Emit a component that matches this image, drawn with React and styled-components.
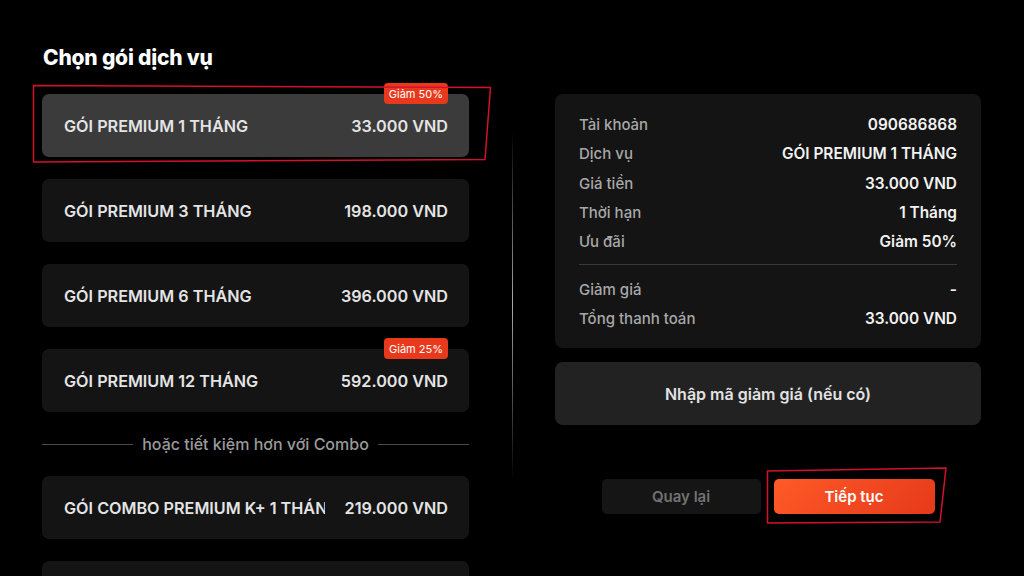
import React from "react";
import styled, { createGlobalStyle } from "styled-components";

const Global = createGlobalStyle`
  html, body { margin: 0; padding: 0; background: #000; }
  body { font-family: Inter, "Noto Sans", sans-serif; color: #e6e6e6; }
  * { box-sizing: border-box; }
`;

const Page = styled.div`
  position: relative;
  width: 1024px;
  height: 576px;
  overflow: hidden;
  display: flex;
  align-items: flex-start;
  padding-left: 42px;
`;

const LeftCol = styled.div`
  width: 427px;
  display: flex;
  flex-direction: column;
  flex-shrink: 0;
`;

const Title = styled.h1`
  margin: 0;
  padding: 45px 0 0 1px;
  height: 94px;
  font-size: 21px;
  font-weight: 800;
  color: #fff;
  letter-spacing: -0.2px;
`;

const List = styled.div`
  display: flex;
  flex-direction: column;
  gap: 22px;
`;

const Card = styled.div`
  position: relative;
  height: 63px;
  flex-shrink: 0;
  border-radius: 7px;
  background: ${(p) => (p.$active ? "#3b3b3b" : "#141414")};
  display: flex;
  align-items: center;
  gap: 20px;
  padding: 0 21px 0 22px;
  font-size: 16.2px;
  font-weight: 600;
  color: #e4e4e4;
`;

const CardName = styled.div`
  flex: 1;
  min-width: 0;
  overflow: hidden;
  white-space: nowrap;
`;

const CardPrice = styled.div`
  white-space: nowrap;
`;

const Badge = styled.div`
  position: absolute;
  top: -11px;
  right: 21px;
  height: 21px;
  padding: 0 5px;
  border-radius: 4px;
  background: #e8391c;
  color: #fff;
  font-size: 11px;
  font-weight: 400;
  display: flex;
  align-items: center;
`;

const Separator = styled.div`
  display: flex;
  align-items: center;
  gap: 9px;
  height: 20px;
  flex-shrink: 0;
  color: #9a9a9a;
  font-size: 16px;
  font-weight: 500;
  &::before, &::after {
    content: "";
    flex: 1;
    height: 1px;
    background: #4a4a4a;
  }
`;

const VLine = styled.div`
  width: 1px;
  height: 350px;
  margin: 130px 42px 0 43px;
  flex-shrink: 0;
  background: linear-gradient(to bottom, rgba(200,200,200,0) 0%, rgba(200,200,200,0.85) 50%, rgba(200,200,200,0) 100%);
`;

const RightCol = styled.div`
  width: 426px;
  padding-top: 94px;
  display: flex;
  flex-direction: column;
  flex-shrink: 0;
`;

const Summary = styled.div`
  background: #141414;
  border-radius: 8px;
  padding: 16px 24px 15px;
  display: flex;
  flex-direction: column;
`;

const Row = styled.div`
  height: 29.3px;
  display: flex;
  align-items: center;
  justify-content: space-between;
  font-size: 15px;
`;

const Label = styled.span`
  color: #a8a8a8;
  font-weight: 500;
`;

const Value = styled.span`
  color: #f2f2f2;
  font-weight: 600;
  font-size: 15.4px;
`;

const Rule = styled.div`
  height: 1px;
  background: #3a3a3a;
  margin: 8px 0 9px;
`;

const Coupon = styled.div`
  margin-top: 14px;
  height: 63px;
  border-radius: 8px;
  background: #222;
  display: flex;
  align-items: center;
  justify-content: center;
  font-size: 16px;
  font-weight: 600;
  color: #e2e2e2;
`;

const Actions = styled.div`
  margin-top: 54px;
  display: flex;
  justify-content: center;
  gap: 13px;
`;

const Button = styled.button`
  width: ${(p) => (p.$primary ? "161px" : "159px")};
  height: 35px;
  border: none;
  border-radius: 5px;
  font-family: inherit;
  font-size: 15px;
  font-weight: 600;
  color: ${(p) => (p.$primary ? "#fff" : "#727272")};
  background: ${(p) =>
    p.$primary ? "linear-gradient(135deg, #ff5a28 0%, #e6391a 100%)" : "#151515"};
`;

const Overlay = styled.svg`
  position: absolute;
  inset: 0;
  pointer-events: none;
`;

const plans = [
  { name: "GÓI PREMIUM 1 THÁNG", price: "33.000 VND", badge: "Giảm 50%", active: true },
  { name: "GÓI PREMIUM 3 THÁNG", price: "198.000 VND" },
  { name: "GÓI PREMIUM 6 THÁNG", price: "396.000 VND" },
  { name: "GÓI PREMIUM 12 THÁNG", price: "592.000 VND", badge: "Giảm 25%" },
];

const combos = [
  { name: "GÓI COMBO PREMIUM K+ 1 THÁNG", price: "219.000 VND" },
  { name: "GÓI COMBO PREMIUM K+ 3 THÁNG", price: "599.000 VND" },
];

const rows1 = [
  ["Tài khoản", "090686868"],
  ["Dịch vụ", "GÓI PREMIUM 1 THÁNG"],
  ["Giá tiền", "33.000 VND"],
  ["Thời hạn", "1 Tháng"],
  ["Ưu đãi", "Giảm 50%"],
];
const rows2 = [
  ["Giảm giá", "-"],
  ["Tổng thanh toán", "33.000 VND"],
];

function PlanCard({ p }) {
  return (
    <Card $active={p.active}>
      {p.badge && <Badge>{p.badge}</Badge>}
      <CardName>{p.name}</CardName>
      <CardPrice>{p.price}</CardPrice>
    </Card>
  );
}

export default function App() {
  return (
    <>
      <Global />
      <Page>
        <LeftCol>
          <Title>Chọn gói dịch vụ</Title>
          <List>
            {plans.map((p) => (
              <PlanCard key={p.name} p={p} />
            ))}
            <Separator>hoặc tiết kiệm hơn với Combo</Separator>
            {combos.map((p) => (
              <PlanCard key={p.name} p={p} />
            ))}
          </List>
        </LeftCol>
        <VLine />
        <RightCol>
          <Summary>
            {rows1.map(([l, v]) => (
              <Row key={l}>
                <Label>{l}</Label>
                <Value>{v}</Value>
              </Row>
            ))}
            <Rule />
            {rows2.map(([l, v]) => (
              <Row key={l}>
                <Label>{l}</Label>
                <Value>{v}</Value>
              </Row>
            ))}
          </Summary>
          <Coupon>Nhập mã giảm giá (nếu có)</Coupon>
          <Actions>
            <Button>Quay lại</Button>
            <Button $primary>Tiếp tục</Button>
          </Actions>
        </RightCol>
        <Overlay width="1024" height="576" viewBox="0 0 1024 576">
          <polygon
            points="33.5,85.5 490.5,87.5 485,159.5 33.5,162"
            fill="none"
            stroke="#d4112b"
            strokeWidth="1.5"
          />
          <polygon
            points="767.5,471 946,468 940,522 767.5,523"
            fill="none"
            stroke="#d4112b"
            strokeWidth="1.5"
          />
        </Overlay>
      </Page>
    </>
  );
}
